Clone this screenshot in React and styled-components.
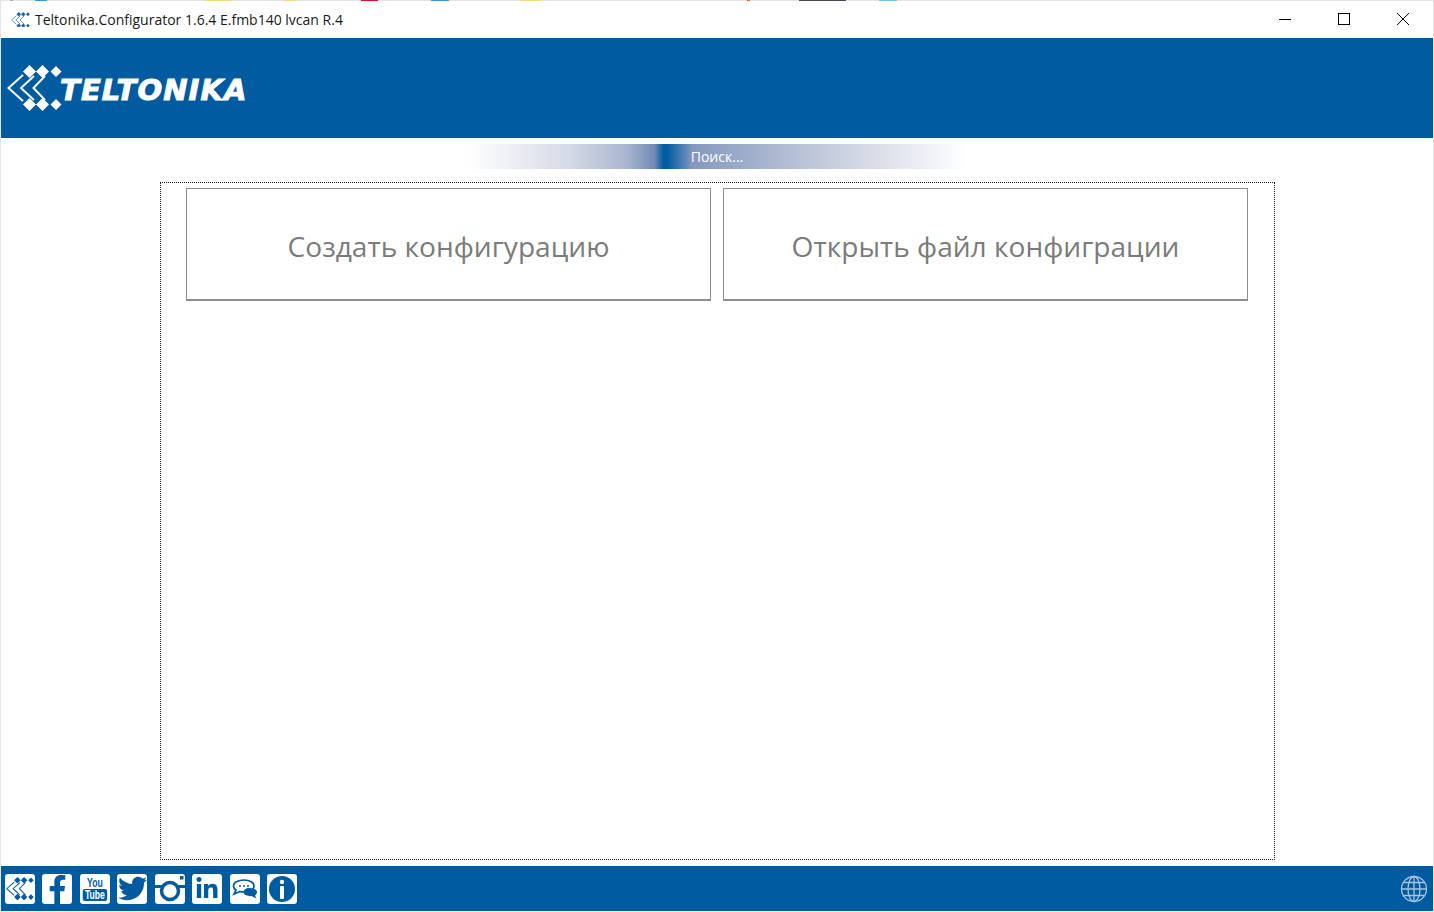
import styled, { createGlobalStyle } from "styled-components";
import { FaFacebookF, FaTwitter, FaLinkedinIn } from "react-icons/fa";

const Global = createGlobalStyle`
  html, body {
    margin: 0;
    padding: 0;
    background: #ffffff;
    overflow: hidden;
  }
`;

function Logo({ size = 55, color = "#ffffff" }) {
  return (
    <svg width={size} height={size * 46 / 55} viewBox="0 0 55 46" fill={color}>
      <path d="M16 10L1.500 23 16 36M27 11L14 23l13 12M38 11L26.500 23 38 35" fill="none" stroke={color} strokeWidth="2" />
      <path d="M22.500 0l6.500 6.500-6.500 6.500L16 6.500zM35.500 0l6.500 6.500-6.500 6.500L29 6.500zM49 1l5.500 5.500L49 12l-5.500-5.500zM22.500 33l6.500 6.500-6.500 6.500-6.500-6.500zM35.500 33l6.500 6.500-6.500 6.500-6.500-6.500zM49 34l5.500 5.500L49 45l-5.500-5.500z" />
    </svg>
  );
}

export default function App() {
  return (
    <Window>
      <Global />
      <TopEdge />
      <TitleBar>
        <TitleLeft>
          <Logo size={19} color="#1e64a5" />
          <TitleText>Teltonika.Configurator 1.6.4 E.fmb140 lvcan R.4</TitleText>
        </TitleLeft>
        <WindowButtons>
          <WindowButton>
            <svg width="12" height="12"><path d="M0 6.500h12" stroke="#000" /></svg>
          </WindowButton>
          <WindowButton>
            <svg width="12" height="12"><rect x=".5" y=".5" width="11" height="11" fill="none" stroke="#000" /></svg>
          </WindowButton>
          <WindowButton>
            <svg width="12" height="12"><path d="M0 0l12 12M12 0L0 12" stroke="#000" /></svg>
          </WindowButton>
        </WindowButtons>
      </TitleBar>

      <Header>
        <Logo />
        <Brand>TELTONIKA</Brand>
      </Header>

      <StatusBar>Поиск...</StatusBar>

      <Main>
        <ActionButton>Создать конфигурацию</ActionButton>
        <ActionButton>Открыть файл конфиграции</ActionButton>
      </Main>

      <Footer>
        <Socials>
          <Social><Logo size={28} color="#005ba1" /></Social>
          <Social $align="flex-end" $justify="flex-end"><FaFacebookF size={29} /></Social>
          <Social>
            <YouTube>
              <span>You</span>
              <b>Tube</b>
            </YouTube>
          </Social>
          <Social><FaTwitter size={29} /></Social>
          <Social>
            <svg width="30" height="30" viewBox="0 0 30 30">
              <circle cx="15" cy="17" r="8.500" fill="none" stroke="#005ba1" strokeWidth="3.500" />
              <path d="M0 12.500h8M22 12.500h8" stroke="#005ba1" strokeWidth="3" />
              <rect x="25" y="2" width="3.500" height="3.500" fill="#005ba1" />
            </svg>
          </Social>
          <Social><FaLinkedinIn size={24} /></Social>
          <Social>
            <svg width="28" height="24" viewBox="0 0 28 24">
              <path d="M13 3c6 0 10 2.500 10 6s-4 6-10 6c-1.500 0-3-.2-4-.5L3 17l2-4c-1.500-1-2.500-2.500-2.500-4C2.500 5.500 7 3 13 3z" fill="none" stroke="#005ba1" strokeWidth="1.700" />
              <path d="M18 11c5 0 8 1.800 8 4.200 0 1.300-.8 2.400-2 3.200l1.500 3-5-2.300c-4.500.3-8-1.500-8-3.900 0-2.400 2.500-4.200 5.500-4.200z" fill="#005ba1" />
              <circle cx="9" cy="9" r="1" fill="#005ba1" />
              <circle cx="13" cy="9" r="1" fill="#005ba1" />
              <circle cx="17" cy="9" r="1" fill="#005ba1" />
            </svg>
          </Social>
          <Social>
            <svg width="30" height="30" viewBox="0 0 30 30">
              <circle cx="15" cy="15" r="13" fill="#005ba1" />
              <circle cx="15" cy="8" r="2.200" fill="#fff" />
              <rect x="13" y="12" width="4" height="13" rx="1" fill="#fff" />
            </svg>
          </Social>
        </Socials>
        <svg width="28" height="28" viewBox="0 0 28 28" fill="none" stroke="#a9c4dc" strokeWidth="1.300">
          <circle cx="14" cy="14" r="12.500" />
          <ellipse cx="14" cy="14" rx="6" ry="12.500" />
          <path d="M14 1.500v25M1.500 14h25M3.500 7.500h21M3.500 20.500h21" />
        </svg>
      </Footer>
    </Window>
  );
}

const Window = styled.div`
  width: 1434px;
  height: 912px;
  box-sizing: border-box;
  display: flex;
  flex-direction: column;
  padding: 0 1px 1px 1px;
  background: #ffffff;
  box-shadow: inset 1px 0 0 #e4e4e4, inset -1px 0 0 #e4e4e4;
  font-family: "Open Sans", "Noto Sans", sans-serif;
`;

const TopEdge = styled.div`
  height: 1px;
  flex: none;
  background: linear-gradient(
    90deg,
    #e4e4e4 9px, #9fb0c8 9px, #9fb0c8 12px, #e4e4e4 12px,
    #e4e4e4 34px, #3a96dc 34px, #3a96dc 46px, #e4e4e4 46px,
    #e4e4e4 204px, #f5d97e 204px, #f5d97e 231px, #e4e4e4 231px,
    #e4e4e4 283px, #f5d97e 283px, #f5d97e 296px, #e4e4e4 296px,
    #e4e4e4 360px, #d8102a 360px, #d8102a 377px, #e4e4e4 377px,
    #e4e4e4 430px, #3a96dc 430px, #3a96dc 448px, #e4e4e4 448px,
    #e4e4e4 519px, #f5d97e 519px, #f5d97e 540px, #e4e4e4 540px,
    #e4e4e4 746px, #e8661a 746px, #e8661a 749px, #e4e4e4 749px,
    #e4e4e4 798px, #444a5a 798px, #444a5a 845px, #e4e4e4 845px,
    #e4e4e4 878px, #7dbdf0 878px, #7dbdf0 896px, #e4e4e4 896px
  );
`;

const TitleBar = styled.div`
  height: 37px;
  flex: none;
  display: flex;
  align-items: center;
  justify-content: space-between;
`;

const TitleLeft = styled.div`
  display: flex;
  align-items: center;
  gap: 5px;
  padding-left: 10px;
`;

const TitleText = styled.span`
  font-size: 14px;
  color: #1a1a1a;
`;

const WindowButtons = styled.div`
  display: flex;
  margin: 0 1px 2px 0;
`;

const WindowButton = styled.div`
  width: 59px;
  height: 35px;
  display: flex;
  align-items: center;
  justify-content: center;
`;

const Header = styled.header`
  height: 100px;
  flex: none;
  background: #005ba1;
  display: flex;
  align-items: center;
  padding-left: 6px;
`;

const Brand = styled.span`
  font-family: "DejaVu Sans", sans-serif;
  font-weight: 700;
  font-style: italic;
  font-size: 29px;
  letter-spacing: 1.100px;
  color: #ffffff;
  -webkit-text-stroke: 1px #ffffff;
  margin-left: -2px;
  margin-top: 3px;
`;

const StatusBar = styled.div`
  flex: none;
  width: 498px;
  height: 25px;
  margin: 6px auto 13px;
  display: flex;
  align-items: center;
  justify-content: center;
  color: #ffffff;
  font-size: 14px;
  background: linear-gradient(
    90deg,
    #ffffff 0%,
    #d5dae6 20%,
    #a9b5cf 32%,
    #7089b5 37.500%,
    #005ba1 39.200%,
    #005ba1 40%,
    #8298bf 45%,
    #a9b5cf 60%,
    #d5dae6 80%,
    #ffffff 100%
  );
`;

const Main = styled.main`
  flex: 1;
  min-height: 0;
  width: 1115px;
  box-sizing: border-box;
  margin: 0 0 6px 159px;
  border: 1px dotted #222222;
  padding: 5px 25px;
  display: flex;
  align-items: flex-start;
  gap: 12px;
`;

const ActionButton = styled.button`
  width: 525px;
  height: 113px;
  box-sizing: border-box;
  background: #ffffff;
  border: 1px solid #8e8e8e;
  border-bottom-width: 2px;
  color: #7b7b7b;
  font-family: "Open Sans", "Noto Sans", sans-serif;
  font-size: 28.100px;
  padding: 4px 0 0;
`;

const Footer = styled.footer`
  height: 45px;
  flex: none;
  background: #005ba1;
  display: flex;
  align-items: center;
  justify-content: space-between;
  padding: 0 5px 0 4px;
`;

const Socials = styled.div`
  display: flex;
  gap: 7.450px;
`;

const Social = styled.a`
  width: 30px;
  height: 30px;
  background: #ffffff;
  border-radius: 3px;
  color: #005ba1;
  overflow: hidden;
  display: flex;
  align-items: ${(p) => p.$align || "center"};
  justify-content: ${(p) => p.$justify || "center"};
`;

const YouTube = styled.div`
  display: flex;
  flex-direction: column;
  align-items: center;
  font-family: "Liberation Sans", sans-serif;
  font-size: 12px;
  line-height: 12px;
  color: #005ba1;

  span {
    font-weight: 700;
    transform: scaleX(0.72);
  }

  b {
    background: #005ba1;
    color: #ffffff;
    border-radius: 3px;
    padding: 0 3px;
    transform: scaleX(0.72);
  }
`;
